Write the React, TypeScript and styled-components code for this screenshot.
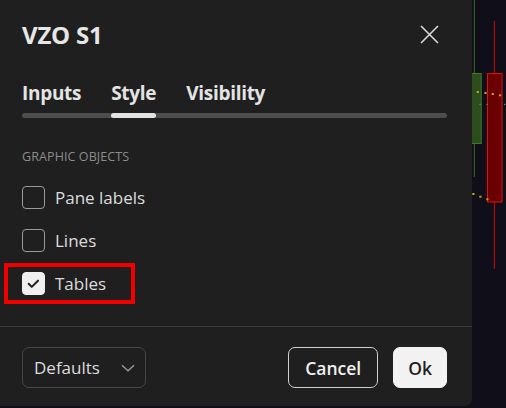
import React from "react";
import styled, { createGlobalStyle } from "styled-components";

const GlobalStyle = createGlobalStyle`
  html, body { margin: 0; padding: 0; background: #0f0e19; }
  body { font-family: "Open Sans", "Noto Sans", sans-serif; }
  * { box-sizing: border-box; }
`;

const Screen = styled.div`
  display: flex;
  width: 506px;
  height: 408px;
  overflow: hidden;
  background: #0f0e19;
`;

const Dialog = styled.div`
  width: 472px;
  height: 406px;
  flex: none;
  background: #1f1f1f;
  border-bottom-right-radius: 7px;
  display: flex;
  flex-direction: column;
  color: #dbdbdb;
`;

const Header = styled.div`
  height: 69px;
  display: flex;
  align-items: center;
  justify-content: space-between;
  padding: 0 33px 0 22px;
`;

const Title = styled.h1`
  margin: 0;
  font-size: 24px;
  font-weight: 700;
  line-height: 30px;
  color: #e6e6e6;
  letter-spacing: -0.2px;
`;

const CloseButton = styled.button`
  width: 19px;
  height: 19px;
  padding: 0;
  border: 0;
  background: none;
  display: flex;
  cursor: pointer;
`;

const TabRow = styled.div`
  position: relative;
  display: flex;
  gap: 30px;
  margin: 12px 25px 0 22px;
  padding-bottom: 13px;

  &::before {
    content: "";
    position: absolute;
    left: 0;
    right: 0;
    bottom: 0;
    height: 5px;
    border-radius: 3px;
    background: #4d4d4d;
  }
`;

const Tab = styled.div<{ $active?: boolean }>`
  position: relative;
  font-size: 19px;
  font-weight: 700;
  line-height: 24px;
  letter-spacing: -0.3px;
  color: #e4e4e4;
  margin-bottom: -13px;
  padding-bottom: 13px;

  &::after {
    content: "";
    display: ${(p) => (p.$active ? "block" : "none")};
    position: absolute;
    left: 0;
    right: 0;
    bottom: 0;
    height: 5px;
    border-radius: 3px;
    background: #e2e2e2;
    z-index: 1;
  }
`;

const Body = styled.div`
  flex: 1;
  display: flex;
  flex-direction: column;
  padding: 0 22px;
`;

const SectionTitle = styled.div`
  margin-top: 31px;
  font-size: 12.5px;
  line-height: 16px;
  color: #8c8c8c;
  letter-spacing: 0.1px;
`;

const Options = styled.div`
  display: flex;
  flex-direction: column;
  gap: 20px;
  margin-top: 21px;
`;

const Row = styled.label`
  position: relative;
  display: flex;
  align-items: center;
  gap: 10px;
  height: 23px;
  font-size: 17px;
  font-weight: 500;
  color: #dcdcdc;
`;

const Box = styled.span<{ $checked?: boolean }>`
  width: 23px;
  height: 23px;
  flex: none;
  border-radius: 4px;
  border: 1.5px solid ${(p) => (p.$checked ? "#f0f0f0" : "#9a9a9a")};
  background: ${(p) => (p.$checked ? "#f0f0f0" : "transparent")};
  display: flex;
  align-items: center;
  justify-content: center;
`;

const Highlight = styled.span`
  position: absolute;
  left: -18.5px;
  top: -9px;
  width: 131px;
  height: 41px;
  border: 4px solid #f20000;
  pointer-events: none;
`;

const Footer = styled.div`
  border-top: 1px solid #3a3a3a;
  display: flex;
  align-items: center;
  padding: 20px 25px 18px 22px;
  gap: 15px;
`;

const Select = styled.div`
  width: 124px;
  height: 41px;
  border: 1px solid #464646;
  border-radius: 7px;
  display: flex;
  align-items: center;
  justify-content: space-between;
  padding: 0 10px 0 11px;
  font-size: 17px;
  font-weight: 500;
  color: #dcdcdc;
  margin-right: auto;
`;

const Button = styled.button<{ $primary?: boolean }>`
  height: 41px;
  padding: 0 14px;
  min-width: ${(p) => (p.$primary ? "53px" : "90px")};
  border-radius: 7px;
  border: 1px solid ${(p) => (p.$primary ? "#f2f2f2" : "#cfcfcf")};
  background: ${(p) => (p.$primary ? "#f2f2f2" : "transparent")};
  color: ${(p) => (p.$primary ? "#1f1f1f" : "#f0f0f0")};
  font-family: "Open Sans", "Noto Sans", sans-serif;
  font-size: 17.5px;
  font-weight: 600;
`;

const Chart = styled.div`
  flex: 1;
  height: 408px;
  background: #0f0e19;
`;

const CloseIcon = () => (
  <svg width="19" height="19" viewBox="0 0 19 19">
    <path d="M1 1L18 18M18 1L1 18" stroke="#dadada" strokeWidth="1.6" fill="none" />
  </svg>
);

const Check = () => (
  <svg width="23" height="23" viewBox="0 0 23 23">
    <path d="M6.2 11.8L9.6 15.2L16.4 8.4" stroke="#1f1f1f" strokeWidth="2.2" fill="none" strokeLinecap="round" strokeLinejoin="round" />
  </svg>
);

const Chevron = () => (
  <svg width="14" height="8" viewBox="0 0 14 8">
    <path d="M1 1.2L7 6.8L13 1.2" stroke="#9c9c9c" strokeWidth="1.3" fill="none" />
  </svg>
);

const yellowTop = [
  [5.7, 92],
  [13.3, 93],
  [20.7, 94],
  [28, 95.3],
];
const yellowBottom = [
  [1.3, 194],
  [8.3, 196.7],
  [15.3, 199.3],
];

const ChartDrawing = () => (
  <svg width="34" height="408" viewBox="0 0 34 408">
    <line x1="2.3" y1="0" x2="2.3" y2="177" stroke="#3b6d22" strokeWidth="1" />
    <rect x="-6" y="73.5" width="15.2" height="70" fill="#2d4d1e" stroke="#3f7a2b" strokeWidth="1" />
    <line x1="22.3" y1="21" x2="22.3" y2="269" stroke="#d10a0a" strokeWidth="1" />
    <rect x="15.5" y="73.5" width="14.5" height="128.5" fill="#6a0000" stroke="#e01010" strokeWidth="1" />
    {yellowTop.map(([x, y], i) => (
      <rect key={"t" + i} x={x - 1} y={y - 1} width="2.2" height="2" fill="#c9a010" />
    ))}
    {yellowBottom.map(([x, y], i) => (
      <rect key={"b" + i} x={x - 1} y={y - 1} width="2.2" height="2" fill="#c9a010" />
    ))}
    <rect x="7.5" y="103.8" width="1.2" height="1.2" fill="#1fb0b0" />
    <rect x="14.5" y="103.8" width="1.2" height="1.2" fill="#1fb0b0" />
    <rect x="32" y="103.8" width="1.2" height="1.2" fill="#1fb0b0" />
  </svg>
);

export default function App() {
  return (
    <>
      <GlobalStyle />
      <Screen>
        <Dialog>
          <Header>
            <Title>VZO S1</Title>
            <CloseButton aria-label="Close">
              <CloseIcon />
            </CloseButton>
          </Header>
          <TabRow>
            <Tab>Inputs</Tab>
            <Tab $active>Style</Tab>
            <Tab>Visibility</Tab>
          </TabRow>
          <Body>
            <SectionTitle>GRAPHIC OBJECTS</SectionTitle>
            <Options>
              <Row>
                <Box />
                Pane labels
              </Row>
              <Row>
                <Box />
                Lines
              </Row>
              <Row>
                <Highlight />
                <Box $checked>
                  <Check />
                </Box>
                Tables
              </Row>
            </Options>
          </Body>
          <Footer>
            <Select>
              Defaults
              <Chevron />
            </Select>
            <Button>Cancel</Button>
            <Button $primary>Ok</Button>
          </Footer>
        </Dialog>
        <Chart>
          <ChartDrawing />
        </Chart>
      </Screen>
    </>
  );
}
